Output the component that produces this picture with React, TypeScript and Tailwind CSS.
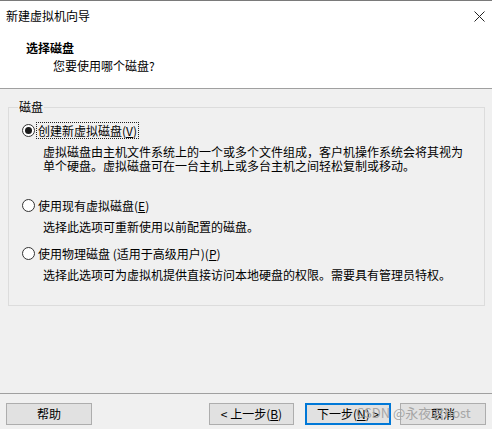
import React from 'react';

const font = { fontFamily: '"Noto Sans CJK SC", "Liberation Sans", sans-serif' };

function Radio({ checked }: { checked?: boolean }) {
  return (
    <span className="w-[13px] h-[13px] rounded-full border border-[#333] bg-white flex items-center justify-center shrink-0">
      {checked && <span className="w-[7px] h-[7px] rounded-full bg-[#1a1a1a]" />}
    </span>
  );
}

function Option({
  checked,
  focused,
  label,
  keyChar,
  desc,
}: {
  checked?: boolean;
  focused?: boolean;
  label: React.ReactNode;
  keyChar: string;
  desc: string[];
}) {
  return (
    <div>
      <div className="flex items-center h-[17px] gap-[2px]">
        <Radio checked={checked} />
        <span className={`leading-[15px] px-[1px] ${focused ? 'outline outline-1 outline-dotted outline-[#222]' : ''}`}>
          {label}(<span className="underline">{keyChar}</span>)
        </span>
      </div>
      <div className="pl-[21px] mt-[6px] leading-[14px]">
        {desc.map((d) => (
          <div key={d}>{d}</div>
        ))}
      </div>
    </div>
  );
}

export default function App() {
  return (
    <div className="relative w-[492px] h-[429px] bg-[#f0f0f0] border-t border-[#7a7a7a] text-[12px] text-black flex flex-col overflow-hidden" style={font}>
      <div className="bg-white border-b border-[#a0a0a0] h-[88px]">
        <div className="h-[30px] flex items-center justify-between pl-[6px] pr-[7px]">
          <span>新建虚拟机向导</span>
          <svg width="11" height="11" viewBox="0 0 11 11" className="text-[#222]">
            <path d="M0.5 0.5 L10.5 10.5 M10.5 0.5 L0.5 10.5" stroke="currentColor" strokeWidth="1" />
          </svg>
        </div>
        <div className="pl-[26px] mt-[10px] leading-[14px] font-bold">选择磁盘</div>
        <div className="pl-[53px] mt-[4px] leading-[14px]">您要使用哪个磁盘?</div>
      </div>

      <div className="flex-1">
        <fieldset className="mx-[8px] mr-[7px] mt-[11px] h-[206px] border border-[#dcdcdc] pl-[13px]">
          <legend className="px-[1px] -ml-[4px] leading-[14px]">磁盘</legend>
          <div className="mt-[8px]">
            <Option
              checked
              focused
              label="创建新虚拟磁盘"
              keyChar="V"
              desc={[
                '虚拟磁盘由主机文件系统上的一个或多个文件组成，客户机操作系统会将其视为',
                '单个硬盘。虚拟磁盘可在一台主机上或多台主机之间轻松复制或移动。',
              ]}
            />
          </div>
          <div className="mt-[24px]">
            <Option label="使用现有虚拟磁盘" keyChar="E" desc={['选择此选项可重新使用以前配置的磁盘。']} />
          </div>
          <div className="mt-[11px]">
            <Option
              label="使用物理磁盘 (适用于高级用户)"
              keyChar="P"
              desc={['选择此选项可为虚拟机提供直接访问本地硬盘的权限。需要具有管理员特权。']}
            />
          </div>
        </fieldset>
      </div>

      <div className="border-t border-[#a0a0a0] h-[36px] flex items-start pt-[9px] px-[6px]">
        <button className="w-[86px] h-[22px] bg-[#e1e1e1] border border-[#adadad]">帮助</button>
        <div className="flex-1" />
        <button className="w-[85px] h-[22px] bg-[#e1e1e1] border border-[#adadad]">
          &lt; 上一步(<span className="underline">B</span>)
        </button>
        <button className="ml-[11px] w-[86px] h-[22px] bg-[#e1e1e1] border-2 border-[#0078d7]">
          下一步(<span className="underline">N</span>) &gt;
        </button>
        <button className="ml-[9px] w-[86px] h-[22px] bg-[#e1e1e1] border border-[#adadad]">取消</button>
      </div>

      {/* watermark over the footer buttons */}
      <div className="absolute left-[356px] top-[403px] text-[13px] leading-[18px] text-[#a6a6a6] pointer-events-none">
        CSDN @永夜君host
      </div>
    </div>
  );
}
